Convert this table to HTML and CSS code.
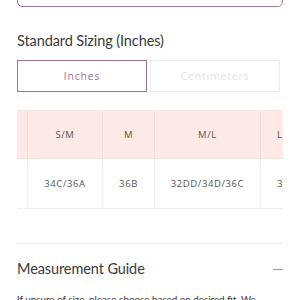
FILE: index.html
```html
<!DOCTYPE html>
<html>
<head>
<meta charset="utf-8">
<link rel="stylesheet" href="styles.css">
</head>
<body>
<div class="page">
  <div class="top-box"></div>
  <h2 class="title">Standard Sizing (Inches)</h2>
  <div class="units">
    <button class="unit active">Inches</button>
    <button class="unit">Centimeters</button>
  </div>
  <div class="table-wrap">
    <table class="sizes">
      <tr class="head">
        <td class="c0"></td>
        <td class="c1">S/M</td>
        <td class="c2">M</td>
        <td class="c3">M/L</td>
        <td class="c4">L</td>
      </tr>
      <tr class="row">
        <td class="c0"></td>
        <td class="c1">34C/36A</td>
        <td class="c2">36B</td>
        <td class="c3">32DD/34D/36C</td>
        <td class="c4">36D</td>
      </tr>
    </table>
  </div>
  <div class="guide">
    <div class="guide-head">
      <h3 class="guide-title">Measurement Guide</h3>
      <span class="minus"></span>
    </div>
    <p class="guide-text">If unsure of size, please choose based on desired fit. We</p>
  </div>
</div>
</body>
</html>
```

FILE: styles.css
```css
html, body {
  margin: 0;
  padding: 0;
  background: #fff;
}
body {
  font-family: "Lato", "Open Sans", sans-serif;
  color: #333;
  overflow: hidden;
}
.page {
  padding: 0 17px;
}
.top-box {
  height: 20px;
  margin-top: -15px;
  border: 1px solid #a57c98;
  border-radius: 5px;
}
.title {
  margin: 24px 0 0;
  font-size: 14.5px;
  line-height: 20px;
  font-weight: 400;
  letter-spacing: -0.1px;
  color: #3a3a3a;
}
.units {
  display: grid;
  grid-template-columns: 130px 130px;
  column-gap: 3px;
  margin-top: 9px;
}
.unit {
  height: 32px;
  background: #fff;
  font-family: "Open Sans", sans-serif;
  font-size: 10.5px;
  letter-spacing: 0.8px;
  color: #e4e4e4;
  border: 1px solid #ececec;
  padding: 0;
}
.unit.active {
  border: 1.5px solid #a3708f;
  color: #a3708f;
}
.table-wrap {
  margin-top: 18px;
  width: 266px;
  overflow: hidden;
  border-top: 1px solid #f3e6e3;
}
.sizes {
  border-collapse: collapse;
  table-layout: fixed;
  width: 335px;
  font-family: "Open Sans", sans-serif;
  font-size: 9.5px;
  letter-spacing: 0.6px;
  color: #555;
}
.sizes td {
  text-align: center;
  padding: 0;
  border-right: 1px solid #eeeeee;
  white-space: nowrap;
  overflow: hidden;
}
.head td {
  background: #fde9e5;
  height: 47px;
  border-right-color: #f6dcd7;
  border-bottom: 1px solid #f3e0dc;
}
.row td {
  height: 49px;
  border-bottom: 1px solid #eeeeee;
}
.c0 { width: 10px; }
.c1 { width: 74px; }
.c2 { width: 51px; }
.c3 { width: 105px; }
.c4 { width: 90px; text-align: left !important; padding-left: 16px !important; }
.guide {
  margin-top: 34px;
  border-top: 1px solid #eeeeee;
}
.guide-head {
  display: flex;
  align-items: center;
  justify-content: space-between;
  margin-top: 15px;
}
.guide-title {
  margin: 0;
  font-size: 14.5px;
  line-height: 20px;
  font-weight: 400;
  letter-spacing: -0.1px;
  color: #3a3a3a;
}
.minus {
  width: 10px;
  height: 1px;
  background: #999;
}
.guide-text {
  margin: 12px 0 0;
  font-size: 9.8px;
  line-height: 16px;
  color: #333;
  white-space: nowrap;
}
```
